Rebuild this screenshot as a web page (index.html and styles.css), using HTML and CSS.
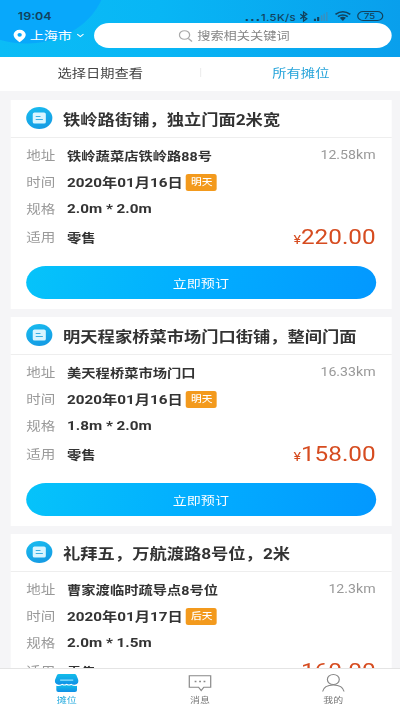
FILE: index.html
```html
<!DOCTYPE html>
<html lang="zh-CN">
<head>
<meta charset="utf-8">
<title>摊位</title>
<link rel="stylesheet" href="styles.css">
</head>
<body>
<div class="app">
  <header class="top">
    <div class="status">
      <span class="clock">19:04</span>
      <span class="speed"><b class="dots">...</b>1.5K/s</span>
      <svg class="bt" viewBox="0 0 8 12"><path d="M1 3.5 7 8.5 4 11V1l3 2.5-6 5"/></svg>
      <svg class="signal" viewBox="0 0 13 10"><path class="on" d="M0 7.500h2V10H0zM3 5.500h2V10H3z"/><path class="off" d="M6.500 3.500h1.500V10H6.500zM9 2h1.300v8H9zM11.500 0h1.200v10h-1.200z"/></svg>
      <svg class="wifi" viewBox="0 0 14 10"><path d="M.8 3.400Q7-1.800 13.200 3.400M2.900 5.700Q7 2.500 11.100 5.700"/><path class="fill" d="M4.400 6.700Q7 5 9.600 6.700L7 10z"/></svg>
      <span class="battery">75</span>
    </div>
    <div class="searchbar">
      <svg class="pin" viewBox="0 0 12 14"><path fill-rule="evenodd" d="M6 .2a5.600 5.600 0 0 0-5.600 5.500C.4 9.500 6 13.800 6 13.800s5.600-4.300 5.600-8.100A5.600 5.600 0 0 0 6 .2zm0 3.500a2 2 0 1 1 0 4 2 2 0 0 1 0-4z"/></svg>
      <span class="city">上海市</span>
      <svg class="chev" viewBox="0 0 8 5"><path d="M1 1l3 2.800L7 1"/></svg>
      <div class="search">
        <svg viewBox="0 0 12 12"><circle cx="5" cy="5" r="4.300"/><path d="M8.200 8.500 11.300 11.500"/></svg>
        <span>搜索相关关键词</span>
      </div>
    </div>
  </header>
  <div class="tabs"><span>选择日期查看</span><i></i><span class="active">所有摊位</span></div>
  <main class="list">
    <article class="card">
      <h2><span class="ico"><svg viewBox="0 0 22 22"><rect x="5.500" y="5.500" width="11" height="11" rx="1.500"/><path d="M8 9.500h4M8 12.500h6"/></svg></span>铁岭路街铺，独立门面2米宽</h2>
      <div class="info">
        <div class="row"><label>地址</label><b>铁岭蔬菜店铁岭路88号</b><span class="dist">12.58km</span></div>
        <div class="row"><label>时间</label><b class="num">2020年01月16日</b><em>明天</em></div>
        <div class="row spec"><label>规格</label><b class="num">2.0m * 2.0m</b></div>
        <div class="row use"><label>适用</label><b>零售</b><span class="price"><small>¥</small>220.00</span></div>
        <button>立即预订</button>
      </div>
    </article>
    <article class="card">
      <h2><span class="ico"><svg viewBox="0 0 22 22"><rect x="5.500" y="5.500" width="11" height="11" rx="1.500"/><path d="M8 9.500h4M8 12.500h6"/></svg></span>明天程家桥菜市场门口街铺，整间门面</h2>
      <div class="info">
        <div class="row"><label>地址</label><b>美天程桥菜市场门口</b><span class="dist">16.33km</span></div>
        <div class="row"><label>时间</label><b class="num">2020年01月16日</b><em>明天</em></div>
        <div class="row spec"><label>规格</label><b class="num">1.8m * 2.0m</b></div>
        <div class="row use"><label>适用</label><b>零售</b><span class="price"><small>¥</small>158.00</span></div>
        <button>立即预订</button>
      </div>
    </article>
    <article class="card">
      <h2><span class="ico"><svg viewBox="0 0 22 22"><rect x="5.500" y="5.500" width="11" height="11" rx="1.500"/><path d="M8 9.500h4M8 12.500h6"/></svg></span>礼拜五，万航渡路8号位，2米</h2>
      <div class="info">
        <div class="row"><label>地址</label><b>曹家渡临时疏导点8号位</b><span class="dist">12.3km</span></div>
        <div class="row"><label>时间</label><b class="num">2020年01月17日</b><em>后天</em></div>
        <div class="row spec"><label>规格</label><b class="num">2.0m * 1.5m</b></div>
        <div class="row use"><label>适用</label><b>零售</b><span class="price"><small>¥</small>160.00</span></div>
      </div>
    </article>
  </main>
  <nav class="nav">
    <a class="active"><svg viewBox="0 0 20 18"><defs><linearGradient id="g" x2="0" y2="1"><stop stop-color="#12bdea"/><stop offset="1" stop-color="#108fe6"/></linearGradient></defs><path fill="url(#g)" d="M3.500 0h13q1.200 0 1.600 1l1.900 5.500q0 3-2.500 4-2 .8-3.700-.7-1.900 1.500-3.800 0-1.900 1.500-3.800 0-1.700 1.500-3.700.7Q0 9.500 0 6.500L1.900 1Q2.300 0 3.500 0z"/><path fill="url(#g)" d="M1.300 11.800q2.700.6 4.900-.8 1.900 1.100 3.800 0 1.900 1.100 3.800 0 2.200 1.400 4.900.8V16q0 2-1.700 2H3q-1.700 0-1.700-2z"/><path d="M4.500 6.200h11" stroke="#8fe2ff" stroke-width="1.200"/></svg>摊位</a>
    <a><svg class="line" viewBox="0 0 20 18"><path d="M1 1.700h18v11.500h-5.800l-2.200 3.300-2.200-3.300H1z"/><path class="dot" d="M5.500 7.500H7M9.300 7.500h1.500M13 7.500h1.500"/></svg>消息</a>
    <a><svg class="line" viewBox="0 0 20 18"><ellipse cx="10" cy="5.500" rx="5" ry="5"/><path d="M1 17.500q1.200-6.500 9-6.500t9 6.500"/></svg>我的</a>
  </nav>
</div>
</body>
</html>
```
FILE: styles.css
```css
* { box-sizing: border-box; margin: 0; padding: 0; }
html, body { width: 400px; height: 710px; overflow: hidden; background: #f5f5f7; }
/* The interface uses a 336px wide canvas widened to the window. */
.app {
  width: 336px; height: 710px; display: flex; flex-direction: column; overflow: hidden;
  transform: scaleX(1.190476); transform-origin: 0 0;
  font-family: Roboto, "Noto Sans CJK SC", sans-serif; font-size: 12px; color: #333;
}
svg { display: block; flex: none; }
.top {
  height: 57px; flex: none; padding: 9px 7px 0 11px;
  background: radial-gradient(circle at 22px -24px, #08a8fb 0 67px, transparent 68px), linear-gradient(90deg, #0bbcf6, #08b6f5 40%, #099fec);
}
.status { height: 14px; display: flex; align-items: center; color: #12425d; font-family: Inter, sans-serif; font-weight: 500; font-size: 9.500px; }
.clock { margin-left: 4px; font-size: 10.500px; font-weight: 600; flex: 1; }
.dots { letter-spacing: .6px; font-size: 12px; }
.speed { letter-spacing: .25px; }
.bt { width: 8px; height: 11px; margin-left: 2px; fill: none; stroke: #12425d; stroke-width: 1.200; }
.signal { width: 13px; height: 9px; margin-left: 4px; }
.signal .on { fill: #12425d; }
.signal .off { fill: #3b8fbd; }
.wifi { width: 14px; height: 10px; margin-left: 5px; fill: none; stroke: #12425d; stroke-width: 1.500; }
.wifi .fill { fill: #12425d; stroke: none; }
.battery { width: 22px; height: 10px; margin: 0 7.500px 0 5px; border: 1.300px solid #12425d; border-radius: 5px; font-size: 8px; line-height: 8px; text-align: center; }
.searchbar { display: flex; align-items: center; height: 25px; color: #fff; }
.pin { width: 11px; height: 14px; fill: #fff; }
.city { margin-left: 3px; font-size: 11.800px; line-height: 14px; }
.chev { width: 7px; height: 5px; margin-left: 4px; fill: none; stroke: #fff; stroke-width: 1.100; }
.search { width: 250px; height: 25px; margin-left: auto; border-radius: 13px; background: #fff; color: #858585; display: flex; align-items: center; justify-content: center; gap: 4px; font-size: 11.100px; padding: 0 15px 2px 0; }
.search svg { width: 12px; height: 12px; margin-top: 2px; fill: none; stroke: #aaa; stroke-width: 1.100; }
.tabs { height: 34px; flex: none; display: flex; align-items: center; background: #fff; padding: 0 0 3px 1px; }
.tabs span { flex: 1; text-align: center; color: #444; }
.tabs i { width: 1px; height: 9px; background: #eee; }
.tabs .active { color: #26a4da; padding-left: 1px; }
.list { flex: 1; min-height: 0; overflow: hidden; padding: 8.500px 7.500px 0 9px; }
.card { height: 209px; margin-bottom: 8px; background: #fff; }
.card h2 { height: 38.500px; border-bottom: 1px solid #eee; padding-left: 13px; display: flex; align-items: center; font-size: 14.500px; font-weight: 700; white-space: nowrap; color: #333; }
.ico { width: 22px; height: 22px; margin-right: 9px; border-radius: 50%; background: linear-gradient(160deg, #18bdf0, #1597e2); }
.ico rect { fill: #d9f5ff; }
.ico path { stroke: #39afe4; stroke-width: 1; fill: none; }
.info { padding: 3.500px 13px 0; }
.row { height: 27px; display: flex; align-items: center; white-space: nowrap; }
.row label { width: 34.300px; color: #999; font-size: 12.200px; }
.row b { font-weight: 700; }
.row .num { font-size: 12.800px; padding-bottom: 1px; }
.row em { margin-left: 3px; width: 26px; height: 17px; border-radius: 2px; background: #f39a1d; color: #fff; font-style: normal; font-size: 9px; line-height: 17px; text-align: center; font-weight: 500; }
.dist { margin-left: auto; color: #999; font-size: 11.900px; }
.row.spec { height: 26px; }
.row.use { height: 31px; }
.price { margin-left: auto; color: #d64c20; font-size: 20.400px; line-height: 24px; padding-top: 2px; }
.price small { font-size: 12px; }
button { display: block; width: 100%; height: 33.500px; margin-top: 13px; border: 0; border-radius: 17px; background: linear-gradient(100deg, #06c3fa, #02adff 50%, #0398ff); color: #fff; font: 11.800px Roboto, "Noto Sans CJK SC", sans-serif; }
.nav { height: 42px; flex: none; border-top: 1px solid #e4e4e4; background: #fff; display: flex; }
.nav a { flex: 1; display: flex; flex-direction: column; align-items: center; padding-top: 5px; font-size: 8.400px; line-height: 12px; gap: 2px; color: #777; }
.nav svg { width: 20px; height: 18px; }
.nav .active { color: #22aade; }
.line { fill: none; stroke: #888; stroke-width: 1; }
.dot { stroke-width: 1.400; }
```
